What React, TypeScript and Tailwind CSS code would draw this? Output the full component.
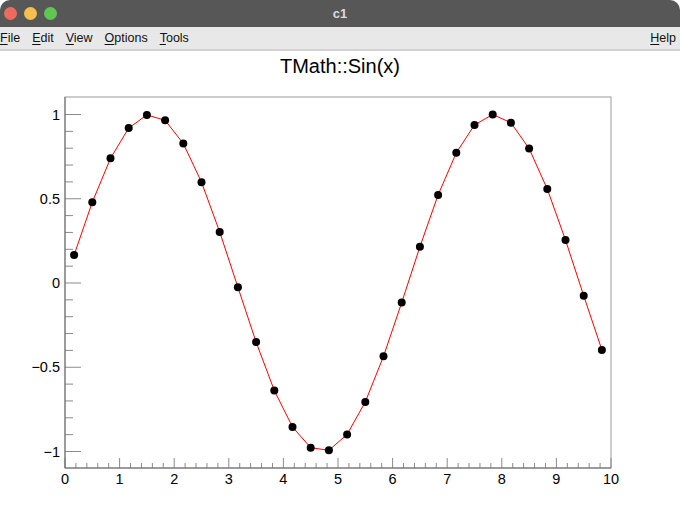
import React from 'react';

const X0 = 65;
const X1 = 611;
const YTOP = 97;
const YBOT = 468;
const SX = (X1 - X0) / 10;
const SY = 168.5;
const Y_ZERO = 283;

const px = (x: number) => X0 + x * SX;
const py = (y: number) => Y_ZERO - y * SY;

const points = Array.from({ length: 30 }, (_, i) => {
  const x = (i + 0.5) / 3;
  return { x, y: Math.sin(x) };
});

function MenuItem({ label }: { label: string }) {
  return (
    <span>
      <span className="underline underline-offset-2 decoration-1">{label[0]}</span>
      {label.slice(1)}
    </span>
  );
}

function Plot() {
  const axis = '#8a8a8a';
  const xTicks: { x: number; major: boolean }[] = [];
  for (let i = 0; i <= 50; i++) xTicks.push({ x: i * 0.2, major: i % 5 === 0 });
  const yTicks: { y: number; major: boolean }[] = [];
  for (let i = -10; i <= 10; i++) yTicks.push({ y: i / 10, major: i % 5 === 0 });
  const yLabels = [
    { y: 1, t: '1' },
    { y: 0.5, t: '0.5' },
    { y: 0, t: '0' },
    { y: -0.5, t: '\u22120.5' },
    { y: -1, t: '\u22121' },
  ];
  const line = points.map((p) => `${px(p.x).toFixed(1)},${py(p.y).toFixed(1)}`).join(' ');

  return (
    <svg width={680} height={428} viewBox="0 85 680 428" className="block">
      {/* frame */}
      <rect x={X0} y={YTOP} width={X1 - X0} height={YBOT - YTOP} fill="none" stroke="#9a9a9a" strokeWidth={1} />
      {/* y ticks */}
      {yTicks.map((t, i) => (
        <line
          key={`y${i}`}
          x1={X0}
          x2={X0 + (t.major ? 16 : 8)}
          y1={py(t.y)}
          y2={py(t.y)}
          stroke={axis}
          strokeWidth={1}
        />
      ))}
      {/* x ticks */}
      {xTicks.map((t, i) => (
        <line
          key={`x${i}`}
          x1={px(t.x)}
          x2={px(t.x)}
          y1={YBOT}
          y2={YBOT - (t.major ? 10 : 5)}
          stroke={axis}
          strokeWidth={1}
        />
      ))}
      <line x1={X0} x2={X1} y1={YBOT} y2={YBOT} stroke="#6a6a6a" strokeWidth={1} />
      <line x1={X0} x2={X0} y1={YTOP} y2={YBOT} stroke="#6a6a6a" strokeWidth={1} />
      {/* labels */}
      <g fontFamily="'Liberation Sans', Arial, sans-serif" fontSize={14.5} fill="#000">
        {yLabels.map((l) => (
          <text key={l.t} x={60} y={py(l.y) + 5} textAnchor="end">
            {l.t}
          </text>
        ))}
        {Array.from({ length: 11 }, (_, i) => (
          <text key={i} x={px(i)} y={484} textAnchor="middle">
            {i}
          </text>
        ))}
      </g>
      {/* curve */}
      <polyline points={line} fill="none" stroke="#ff0000" strokeWidth={1} />
      {points.map((p, i) => (
        <circle key={i} cx={px(p.x)} cy={py(p.y)} r={4} fill="#000" />
      ))}
    </svg>
  );
}

export default function App() {
  return (
    <div className="w-[680px] h-[513px] bg-white overflow-hidden" style={{ fontFamily: "'Liberation Sans', Arial, sans-serif" }}>
      <div className="h-[27px] bg-[#575757] rounded-t-[10px] flex items-center relative">
        <div className="flex items-center gap-[7px] pl-[4px]">
          <span className="w-[13px] h-[13px] rounded-full bg-[#ed6a5e]" />
          <span className="w-[13px] h-[13px] rounded-full bg-[#f4bf4f]" />
          <span className="w-[13px] h-[13px] rounded-full bg-[#61c554]" />
        </div>
        <div className="absolute inset-0 flex items-center justify-center text-[13px] font-bold text-[#dcdcdc]">c1</div>
      </div>
      <div className="h-[24px] bg-[#e8e8e8] border-b-2 border-[#d2d2d2] flex items-center justify-between text-[12.5px] text-[#111]">
        <div className="flex gap-[12px]">
          <MenuItem label="File" />
          <MenuItem label="Edit" />
          <MenuItem label="View" />
          <MenuItem label="Options" />
          <MenuItem label="Tools" />
        </div>
        <div className="pr-[4px]">
          <MenuItem label="Help" />
        </div>
      </div>
      <div className="h-[34px] flex items-start justify-center pt-[3px] text-[20px] text-black leading-[24px]">
        TMath::Sin(x)
      </div>
      <Plot />
    </div>
  );
}
